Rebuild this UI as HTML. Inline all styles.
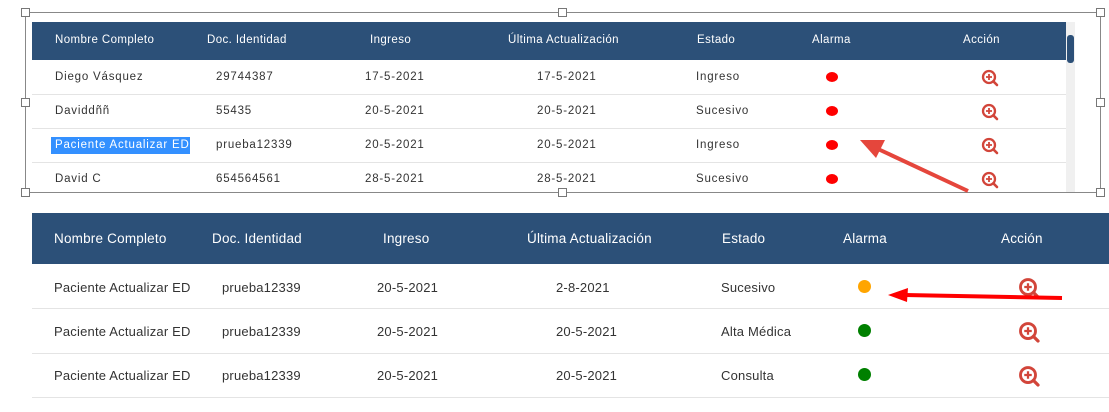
<!DOCTYPE html>
<html><head><meta charset="utf-8"><style>
body{margin:0;width:1109px;height:412px;background:#fff;position:relative;overflow:hidden;font-family:"Liberation Sans",sans-serif;}
.a{position:absolute;white-space:nowrap;}
.hd{position:absolute;background:#2c5078;}
.t{font-size:11.5px;color:#333;letter-spacing:0.8px;}
.th{font-size:11.5px;color:#fff;letter-spacing:0.4px;}
.b{font-size:13px;color:#333;letter-spacing:0.2px;}
.bh{font-size:13.5px;color:#fff;letter-spacing:0.2px;}
.ln{position:absolute;height:1px;background:#e4e4e4;}
.dot{position:absolute;border-radius:50%;}
.h{position:absolute;width:7px;height:7px;border:1px solid #777;background:#fff;}
</style></head><body>
<!-- top -->
<div class="hd" style="left:32px;top:22px;width:1034px;height:38px"></div>
<div class="a" style="left:1066px;top:22px;width:9px;height:170px;background:#f0f0f0"></div>
<div class="a" style="left:1067px;top:35px;width:7px;height:28px;background:#2c5078;border-radius:3px"></div>
<div class="a th" style="left:55px;top:34px">Nombre Completo</div>
<div class="a th" style="left:207px;top:34px">Doc. Identidad</div>
<div class="a th" style="left:370px;top:34px">Ingreso</div>
<div class="a th" style="left:508px;top:34px">Última Actualización</div>
<div class="a th" style="left:697px;top:34px">Estado</div>
<div class="a th" style="left:812px;top:34px">Alarma</div>
<div class="a th" style="left:963px;top:34px">Acción</div>
<div class="ln" style="left:32px;top:94px;width:1034px"></div>
<div class="ln" style="left:32px;top:128px;width:1034px"></div>
<div class="ln" style="left:32px;top:162px;width:1034px"></div>

<div class="a t" style="left:55px;top:71px">Diego Vásquez</div>
<div class="a t" style="left:216px;top:71px">29744387</div>
<div class="a t" style="left:365px;top:71px">17-5-2021</div>
<div class="a t" style="left:537px;top:71px">17-5-2021</div>
<div class="a t" style="left:696px;top:71px">Ingreso</div>

<div class="a t" style="left:55px;top:105px">Daviddññ</div>
<div class="a t" style="left:216px;top:105px">55435</div>
<div class="a t" style="left:365px;top:105px">20-5-2021</div>
<div class="a t" style="left:537px;top:105px">20-5-2021</div>
<div class="a t" style="left:696px;top:105px">Sucesivo</div>

<div class="a" style="left:51px;top:137px;width:139px;height:17px;background:#3390ff"></div>
<div class="a t" style="left:55px;top:139px;color:#fff">Paciente Actualizar ED</div>
<div class="a t" style="left:216px;top:139px">prueba12339</div>
<div class="a t" style="left:365px;top:139px">20-5-2021</div>
<div class="a t" style="left:537px;top:139px">20-5-2021</div>
<div class="a t" style="left:696px;top:139px">Ingreso</div>

<div class="a t" style="left:55px;top:173px">David C</div>
<div class="a t" style="left:216px;top:173px">654564561</div>
<div class="a t" style="left:365px;top:173px">28-5-2021</div>
<div class="a t" style="left:537px;top:173px">28-5-2021</div>
<div class="a t" style="left:696px;top:173px">Sucesivo</div>

<div class="dot" style="left:826px;top:72px;width:12px;height:10px;background:#f00"></div>
<div class="dot" style="left:826px;top:106px;width:12px;height:10px;background:#f00"></div>
<div class="dot" style="left:826px;top:140px;width:12px;height:10px;background:#f00"></div>
<div class="dot" style="left:826px;top:174px;width:12px;height:10px;background:#f00"></div>

<svg class="a" style="left:0;top:0" width="1109" height="412">
<defs><g id="mg"><circle cx="0" cy="0" r="6" fill="none" stroke="#d2453a" stroke-width="2.3"/><path d="M-3 0H3M0 -3V3" stroke="#d2453a" stroke-width="1.8"/><path d="M4.3 4.3L8 8" stroke="#d2453a" stroke-width="2.6" stroke-linecap="round"/></g></defs>
<use href="#mg" x="989" y="77"/><use href="#mg" x="989" y="111"/><use href="#mg" x="989" y="145"/><use href="#mg" x="989" y="179"/>
<rect x="25.5" y="12.5" width="1075" height="180" fill="none" stroke="#888" stroke-width="1"/>
<g transform="translate(1028,287) scale(1.25)"><use href="#mg"/></g>
<g transform="translate(1028,331) scale(1.25)"><use href="#mg"/></g>
<g transform="translate(1028,375) scale(1.25)"><use href="#mg"/></g>
</svg>
<div class="h" style="left:21px;top:8px"></div>
<div class="h" style="left:558px;top:8px"></div>
<div class="h" style="left:1096px;top:8px"></div>
<div class="h" style="left:21px;top:98px"></div>
<div class="h" style="left:1096px;top:98px"></div>
<div class="h" style="left:21px;top:188px"></div>
<div class="h" style="left:558px;top:188px"></div>
<div class="h" style="left:1096px;top:188px"></div>

<!-- bottom -->
<div class="hd" style="left:32px;top:213px;width:1077px;height:51px"></div>
<div class="a bh" style="left:54px;top:231px">Nombre Completo</div>
<div class="a bh" style="left:212px;top:231px">Doc. Identidad</div>
<div class="a bh" style="left:383px;top:231px">Ingreso</div>
<div class="a bh" style="left:527px;top:231px">Última Actualización</div>
<div class="a bh" style="left:722px;top:231px">Estado</div>
<div class="a bh" style="left:843px;top:231px">Alarma</div>
<div class="a bh" style="left:1001px;top:231px">Acción</div>
<div class="ln" style="left:32px;top:308px;width:1077px"></div>
<div class="ln" style="left:32px;top:353px;width:1077px"></div>
<div class="ln" style="left:32px;top:397px;width:1077px"></div>

<div class="a b" style="left:54px;top:280px">Paciente Actualizar ED</div>
<div class="a b" style="left:222px;top:280px">prueba12339</div>
<div class="a b" style="left:377px;top:280px">20-5-2021</div>
<div class="a b" style="left:556px;top:280px">2-8-2021</div>
<div class="a b" style="left:721px;top:280px">Sucesivo</div>

<div class="a b" style="left:54px;top:324px">Paciente Actualizar ED</div>
<div class="a b" style="left:222px;top:324px">prueba12339</div>
<div class="a b" style="left:377px;top:324px">20-5-2021</div>
<div class="a b" style="left:556px;top:324px">20-5-2021</div>
<div class="a b" style="left:721px;top:324px">Alta Médica</div>

<div class="a b" style="left:54px;top:368px">Paciente Actualizar ED</div>
<div class="a b" style="left:222px;top:368px">prueba12339</div>
<div class="a b" style="left:377px;top:368px">20-5-2021</div>
<div class="a b" style="left:556px;top:368px">20-5-2021</div>
<div class="a b" style="left:721px;top:368px">Consulta</div>

<div class="dot" style="left:858px;top:280px;width:13px;height:13px;background:#ffa500"></div>
<div class="dot" style="left:858px;top:324px;width:13px;height:13px;background:#008000"></div>
<div class="dot" style="left:858px;top:368px;width:13px;height:13px;background:#008000"></div>

<svg class="a" style="left:0;top:0" width="1109" height="412">
<path d="M968 191L878 149" stroke="#e5463c" stroke-width="4"/>
<polygon points="860,140 885,140 876,158" fill="#e5463c"/>
<path d="M1062 298L905 295" stroke="#f00" stroke-width="4"/>
<polygon points="888,295 908,288 907,302" fill="#f00"/>
</svg>
</body></html>
